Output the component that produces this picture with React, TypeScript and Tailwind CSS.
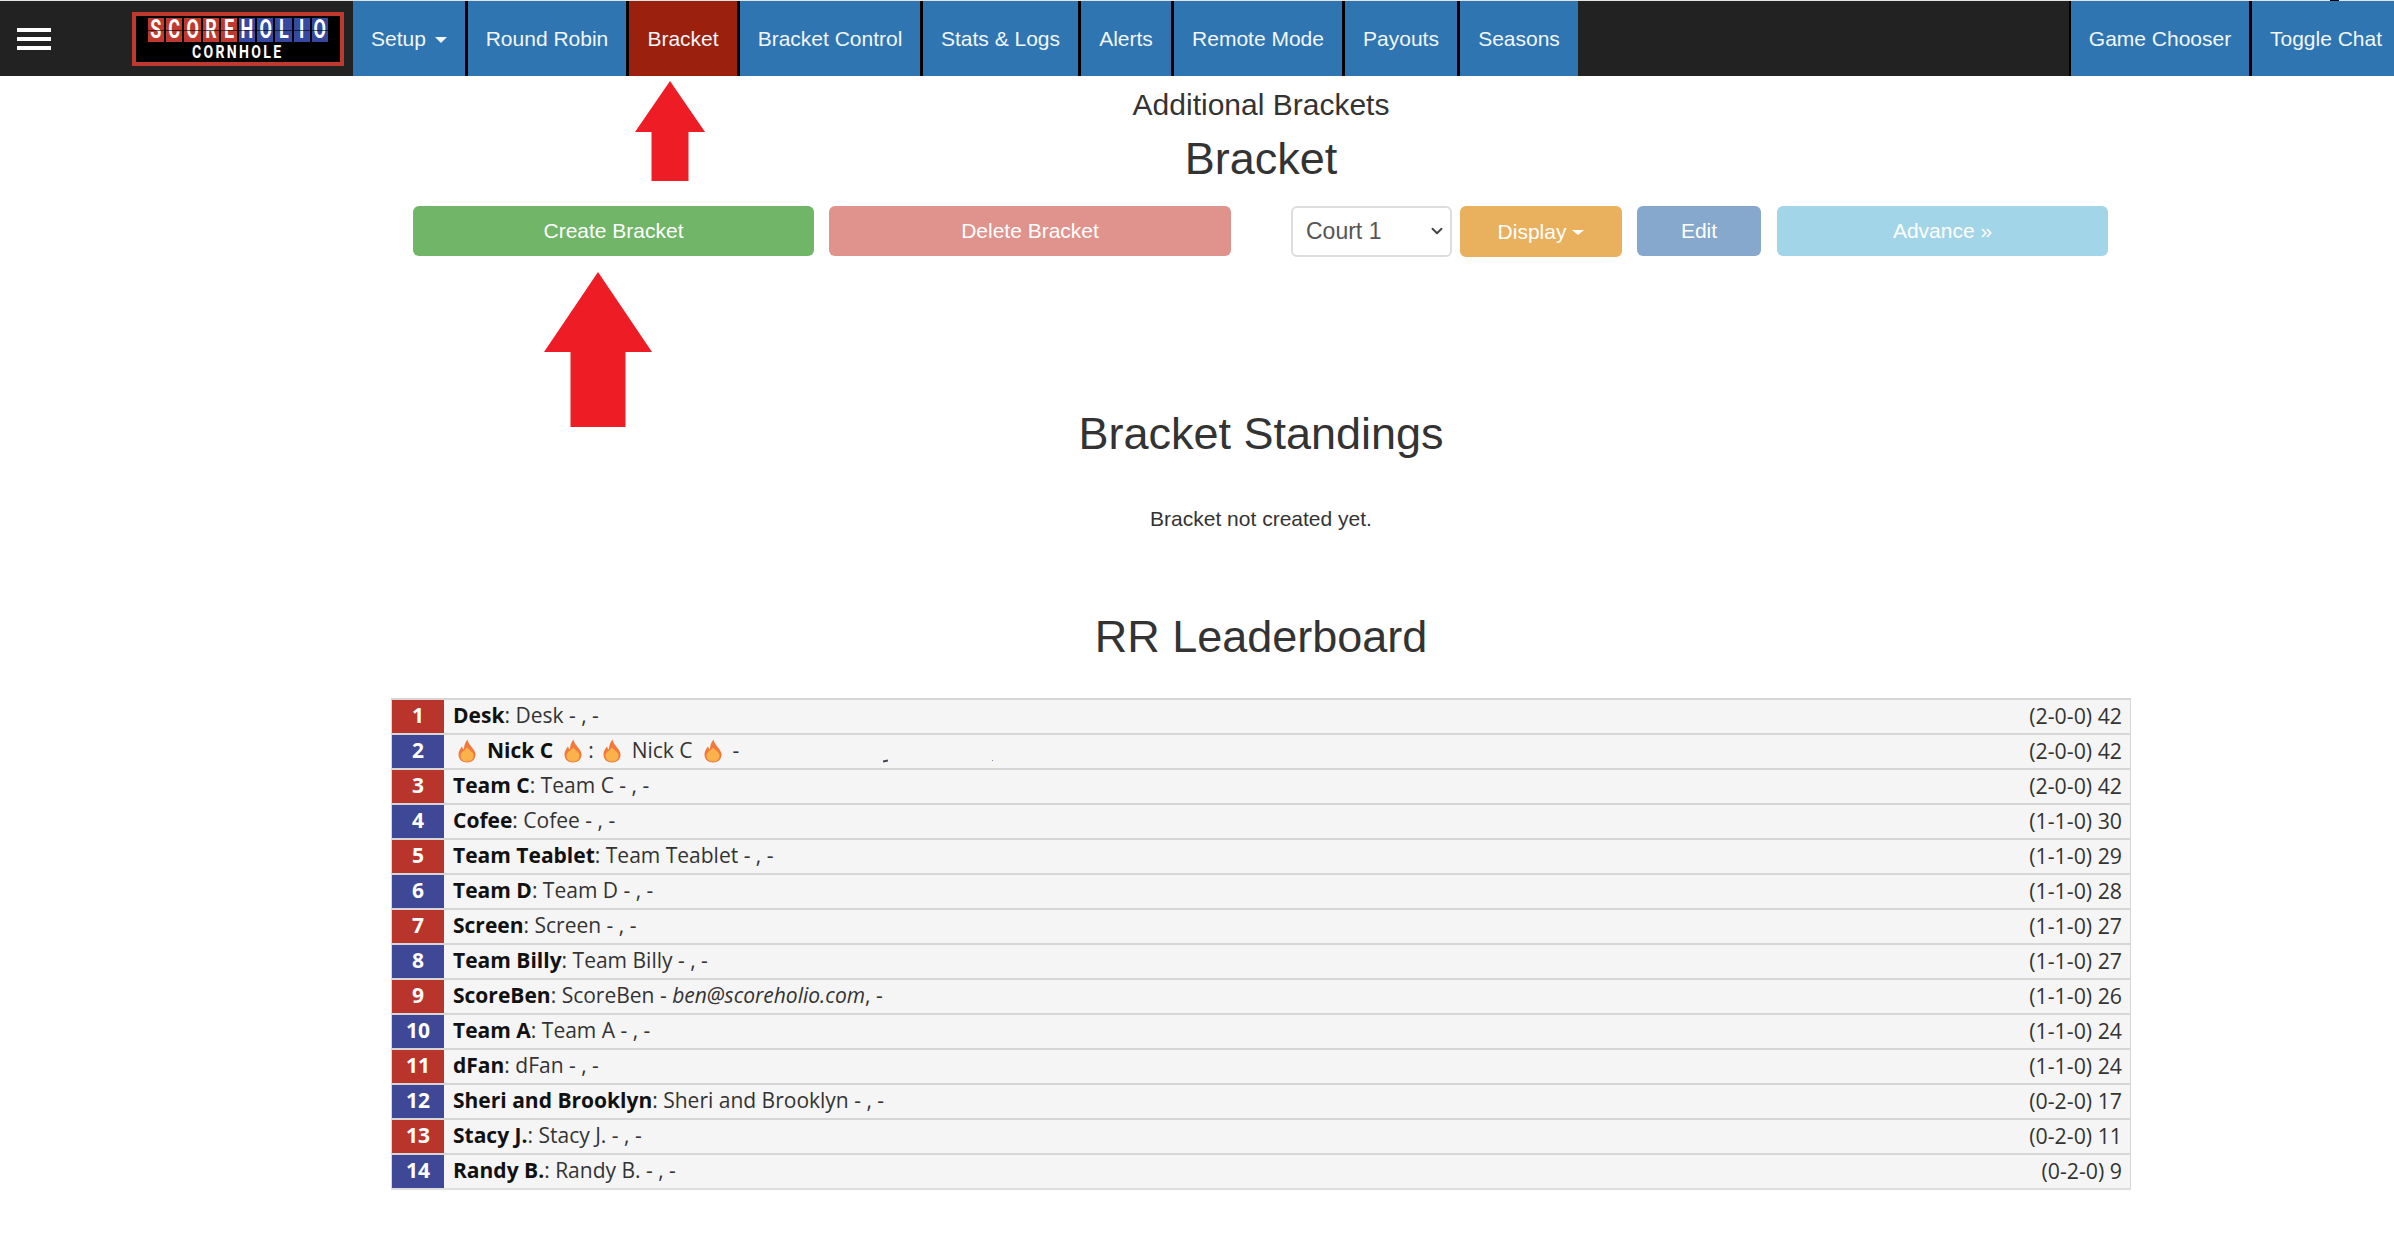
import React from 'react';
import { ChevronDown } from 'lucide-react';

const navLeft = [
  { label: 'Setup', w: 'w-[115px]', caret: true },
  { label: 'Round Robin', w: 'w-[161px]' },
  { label: 'Bracket', w: 'w-[111px]', active: true },
  { label: 'Bracket Control', w: 'w-[183px]' },
  { label: 'Stats & Logs', w: 'w-[158px]' },
  { label: 'Alerts', w: 'w-[93px]' },
  { label: 'Remote Mode', w: 'w-[171px]' },
  { label: 'Payouts', w: 'w-[115px]' },
  { label: 'Seasons', w: 'w-[118px]' },
];

const rows = [
  { name: 'Desk', score: '(2-0-0) 42' },
  { name: 'Nick C', score: '(2-0-0) 42', fire: true },
  { name: 'Team C', score: '(2-0-0) 42' },
  { name: 'Cofee', score: '(1-1-0) 30' },
  { name: 'Team Teablet', score: '(1-1-0) 29' },
  { name: 'Team D', score: '(1-1-0) 28' },
  { name: 'Screen', score: '(1-1-0) 27' },
  { name: 'Team Billy', score: '(1-1-0) 27' },
  { name: 'ScoreBen', score: '(1-1-0) 26', email: 'ben@scoreholio.com' },
  { name: 'Team A', score: '(1-1-0) 24' },
  { name: 'dFan', score: '(1-1-0) 24' },
  { name: 'Sheri and Brooklyn', score: '(0-2-0) 17' },
  { name: 'Stacy J.', score: '(0-2-0) 11' },
  { name: 'Randy B.', score: '(0-2-0) 9' },
];

const Flame = () => (
  <svg width="18" height="24" viewBox="0 0 18 24" className="shrink-0">
    <path d="M9.5 0.5C10 4 12 5.5 14 8.5C16.5 11.5 17.5 13.5 17.5 15.5C17.5 20.5 13.8 23.5 9 23.5C4.2 23.5 0.5 20.5 0.5 15.5C0.5 12 2.5 9.5 4 7.5C4.5 9 5 10 6 10.5C6 7 7 3 9.5 0.5Z" fill="#f4783c" />
    <path d="M9 8.5C11 11 15.5 13 15.5 16.5C15.5 20.5 12.5 22.5 9 22.5C5.5 22.5 2.5 20.5 2.5 16.5C2.5 13 7 11.5 9 8.5Z" fill="#fbb24a" />
  </svg>
);

const Arrow = ({ className, w, h, wing, shaft }: { className: string; w: number; h: number; wing: number; shaft: number }) => {
  const left = (w - shaft) / 2;
  return (
    <svg width={w} height={h} viewBox={`0 0 ${w} ${h}`} className={className}>
      <path
        d={`M${w / 2} 0L${w} ${wing}H${left + shaft}V${h}H${left}V${wing}H0Z`}
        fill="#ee1c25"
      />
    </svg>
  );
};

const Logo = () => (
  <div className="w-[212px] h-[54px] border-4 border-[#c0392f] bg-black flex flex-col items-center font-['Roboto',sans-serif]">
    <div className="flex gap-[2px] mt-[2px]">
      {'SCOREHOLIO'.split('').map((c, i) => (
        <div
          key={i}
          className={`relative w-[16.2px] h-[24px] flex items-center justify-center text-white font-bold leading-none ${i < 5 ? 'bg-[#c0392f]' : 'bg-[#34499f]'}`}
        >
          <span className="text-[25px] scale-x-[0.72]">{c}</span>
          <div className="absolute left-0 right-0 top-[12px] h-px bg-black/60" />
        </div>
      ))}
    </div>
    <div className="text-white text-[18px] font-bold leading-[15px] tracking-[3px] scale-x-[0.78] mt-[2px] whitespace-nowrap">CORNHOLE</div>
  </div>
);

const NavItem = ({ label, w, caret, active }: { label: string; w: string; caret?: boolean; active?: boolean }) => (
  <div className={`${w} h-full flex items-center justify-center border-r-[3px] border-black last:border-r-0 text-[#f2f6fa] ${active ? 'bg-[#9b210e]' : 'bg-[#2e75b2]'}`}>
    {label}
    {caret && <span className="ml-[9px] mt-[2px] w-0 h-0 border-x-[6px] border-x-transparent border-t-[6px] border-t-[#f2f6fa]" />}
  </div>
);

export default function App() {
  return (
    <div className="relative min-h-[1233px] bg-white text-[#333] font-['Liberation_Sans',Arial,sans-serif] overflow-hidden">
      <div className="h-px bg-[#e4e4e4]" />
      <div className="absolute top-0 left-[2330px] w-[9px] h-px bg-black" />

      <nav className="h-[75px] bg-[#222] flex items-center text-[21px]">
        <div className="w-[353px] h-full flex items-center shrink-0">
          <div className="ml-[17px] w-[34px] flex flex-col gap-[5px]">
            <div className="h-[4px] bg-white" />
            <div className="h-[4px] bg-white" />
            <div className="h-[4px] bg-white" />
          </div>
          <div className="ml-[81px]">
            <Logo />
          </div>
        </div>
        <div className="flex h-full">
          {navLeft.map((n) => (
            <NavItem key={n.label} {...n} />
          ))}
        </div>
        <div className="ml-auto flex h-full">
          <div className="w-[183px] h-full flex items-center justify-center border-l-2 border-r-[3px] border-black bg-[#2e75b2] text-[#f2f6fa]">Game Chooser</div>
          <div className="w-[142px] h-full flex items-center justify-center pl-[6px] bg-[#2e75b2] text-[#f2f6fa] whitespace-nowrap">Toggle Chat</div>
        </div>
      </nav>

      <main className="ml-[391px] w-[1740px]">
        <h3 className="text-[30px] leading-[36px] text-center mt-[11px]">Additional Brackets</h3>
        <h2 className="text-[45px] leading-[50px] text-center mt-[11px]">Bracket</h2>

        <div className="flex items-start ml-[22px] mt-[22px] text-[21px] text-white">
          <div className="w-[401px] h-[50px] flex items-center justify-center rounded-[6px] bg-[#70b568]">Create Bracket</div>
          <div className="w-[402px] h-[50px] ml-[15px] flex items-center justify-center rounded-[6px] bg-[#df938c]">Delete Bracket</div>
          <div className="relative w-[161px] h-[51px] ml-[60px]">
            <select className="w-full h-full pl-[13px] rounded-[6px] border-2 border-[#ddd] bg-white text-[#555] text-[23px] appearance-none">
              <option>Court 1</option>
            </select>
            <ChevronDown size={18} strokeWidth={2.5} className="absolute right-[6px] top-[16px] text-[#444] pointer-events-none" />
          </div>
          <div className="w-[162px] h-[51px] ml-[8px] flex items-center justify-center rounded-[6px] bg-[#e9b05e]">
            Display
            <span className="ml-[6px] mt-[2px] w-0 h-0 border-x-[6px] border-x-transparent border-t-[5px] border-t-white" />
          </div>
          <div className="w-[124px] h-[50px] ml-[15px] flex items-center justify-center rounded-[6px] bg-[#86a8cd]">Edit</div>
          <div className="w-[331px] h-[50px] ml-[16px] flex items-center justify-center rounded-[6px] bg-[#a3d5e9]">Advance »</div>
        </div>

        <h2 className="text-[45px] leading-[50px] text-center mt-[152px]">Bracket Standings</h2>
        <p className="text-[21px] leading-[30px] text-center mt-[45px]">Bracket not created yet.</p>
        <h2 className="text-[45px] leading-[50px] text-center mt-[78px]">RR Leaderboard</h2>

        <div className="mt-[36px] border-b-2 border-[#ddd] font-['Open_Sans',sans-serif] text-[21px]">
          {rows.map((r, i) => (
            <div key={r.name} className="h-[35px] flex items-stretch bg-[#f5f5f5] border-t-2 border-x border-[#d6d6d6] text-[#333]">
              <div className={`w-[52px] shrink-0 pb-[2px] flex items-center justify-center font-bold text-white ${i % 2 === 0 ? 'bg-[#b9352b]' : 'bg-[#3f4797]'}`}>
                {i + 1}
              </div>
              <div className="flex-1 flex items-center pl-[9px] pr-[8px] pb-[2px] whitespace-pre">
                {r.fire ? (
                  <>
                    <span className="ml-[5px]"><Flame /></span>
                    <b className="ml-[11px] text-[#111]">Nick C</b>
                    <span className="ml-[11px]"><Flame /></span>
                    <span className="ml-[6px]">:</span>
                    <span className="ml-[9px]"><Flame /></span>
                    <span className="ml-[11px]">Nick C</span>
                    <span className="ml-[11px]"><Flame /></span>
                    <span className="ml-[11px]">-</span>
                  </>
                ) : (
                  <span>
                    <b className="text-[#111]">{r.name}</b>: {r.name} - {r.email && <i>{r.email}</i>}, -
                  </span>
                )}
                <span className="ml-auto text-[21.3px]">{r.score}</span>
              </div>
            </div>
          ))}
        </div>
      </main>

      <Arrow className="absolute left-[635px] top-[81px]" w={70} h={100} wing={51} shaft={37} />
      <Arrow className="absolute left-[544px] top-[272px]" w={108} h={155} wing={80} shaft={55} />
      <div className="absolute left-[883px] top-[760px] w-[5px] h-[2px] -rotate-12 bg-[#445]" />
      <div className="absolute left-[992px] top-[760px] w-px h-px bg-[#88a]" />
    </div>
  );
}
